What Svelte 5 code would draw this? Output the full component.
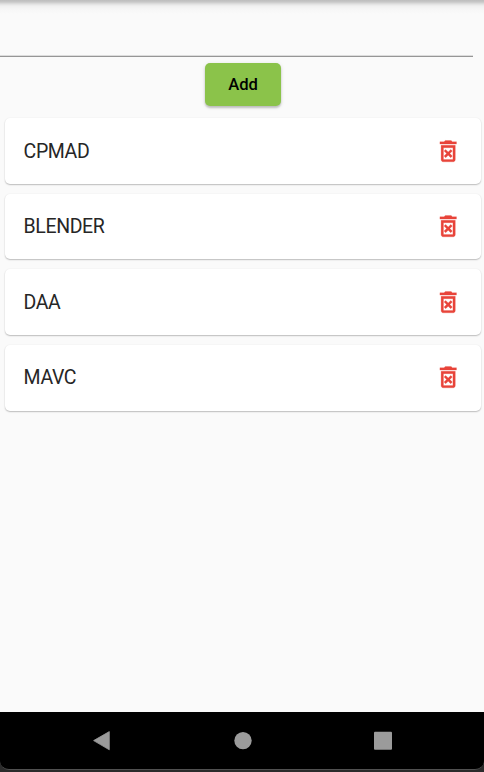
<script>
  let items = $state(['CPMAD', 'BLENDER', 'DAA', 'MAVC']);
  let draft = $state('');

  function add() {
    const name = draft.trim();
    if (name) items.push(name);
    draft = '';
  }
</script>

<div class="screen">
  <div class="bar-shadow"></div>
  <main>
    <input class="field" aria-label="Item" bind:value={draft} />
    <button class="add" onclick={add}>Add</button>
    <ul>
      {#each items as item, i}
        <li>
          <span>{item}</span>
          <button class="delete" aria-label="Delete" onclick={() => items.splice(i, 1)}>
            <svg viewBox="0 0 24 24" width="28.4" height="28.4" fill="#e8443a" stroke="#e8443a" stroke-width="0.2">
              <path d="M14.12 10.47L12 12.59l-2.13-2.12-1.41 1.41L10.59 14l-2.12 2.12 1.41 1.41L12 15.41l2.12 2.12 1.41-1.41L13.41 14l2.12-2.12zM15.5 4l-1-1h-5l-1 1H5v2h14V4zM6 19c0 1.1.9 2 2 2h8c1.1 0 2-.9 2-2V7H6v12zM8 9h8v10H8V9z" />
            </svg>
          </button>
        </li>
      {/each}
    </ul>
  </main>
  <footer>
    <nav>
      <svg viewBox="0 0 20 20" width="20" height="20"><path d="M1.6 9.6 17.3 .6v18.2Z" stroke="#9b9b9b" stroke-width="0.8" stroke-linejoin="round" /></svg>
      <svg viewBox="0 0 20 20" width="20" height="20"><circle cx="10" cy="9.6" r="8.7" /></svg>
      <svg viewBox="0 0 20 20" width="20" height="20"><rect x="1" y="0.8" width="18" height="18" rx="1" /></svg>
    </nav>
  </footer>
</div>

<style>
  .screen {
    position: relative;
    display: flex;
    flex-direction: column;
    width: 484px;
    height: 772px;
    overflow: hidden;
    background: #fafafa;
    font-family: Roboto, sans-serif;
  }
  .bar-shadow {
    position: absolute;
    inset: 0 0 auto;
    height: 14px;
    background: linear-gradient(#bdbdbd 0, #c8c8c8 2px, #e0e0e0 4px, #f0f0f0 6px, #f6f6f6 9px, #fafafa 14px);
  }
  main {
    flex: 1;
    display: flex;
    flex-direction: column;
  }
  .field {
    box-sizing: border-box;
    width: 473px;
    height: 57px;
    padding: 20px 12px 8px;
    border: 0;
    border-bottom: 1px solid #969696;
    box-shadow: inset 0 -1px 0 #dcdcdc;
    outline: 0;
    background: transparent;
    font: 19px Roboto, sans-serif;
  }
  .add {
    align-self: center;
    width: 76px;
    height: 43px;
    margin: 6px 0 0 2px;
    padding: 0;
    border: 0;
    border-radius: 5px;
    background: #8bc34a;
    box-shadow: 0 2px 2px rgba(0, 0, 0, 0.18), 0 1px 4px rgba(0, 0, 0, 0.12);
    color: #000;
    font: 500 16.6px Roboto, sans-serif;
  }
  ul {
    display: flex;
    flex-direction: column;
    gap: 9.8px;
    margin: 12px 3px 0 5px;
    padding: 0;
    list-style: none;
  }
  li {
    display: flex;
    align-items: center;
    justify-content: space-between;
    height: 65.8px;
    box-sizing: border-box;
    padding: 0 19px 0 18.6px;
    border-radius: 5px;
    background: #fff;
    box-shadow: 0 1px 1.5px rgba(0, 0, 0, 0.24), 0 0 2px rgba(0, 0, 0, 0.06);
    color: #262626;
    font-size: 19.5px;
    line-height: 24px;
    letter-spacing: -0.4px;
  }
  li span {
    padding-top: 1.4px;
  }
  .delete {
    display: flex;
    padding: 0;
    border: 0;
    background: none;
  }
  footer {
    display: flex;
    height: 60px;
    background: #2b2b2b;
  }
  nav {
    flex: 1;
    display: flex;
    justify-content: space-between;
    box-sizing: border-box;
    height: 58px;
    padding: 19px 91px 0 92px;
    border-bottom: 1px solid #505050;
    border-radius: 0 0 9px 9px;
    background: #000;
  }
  nav svg {
    fill: #9b9b9b;
  }
</style>
